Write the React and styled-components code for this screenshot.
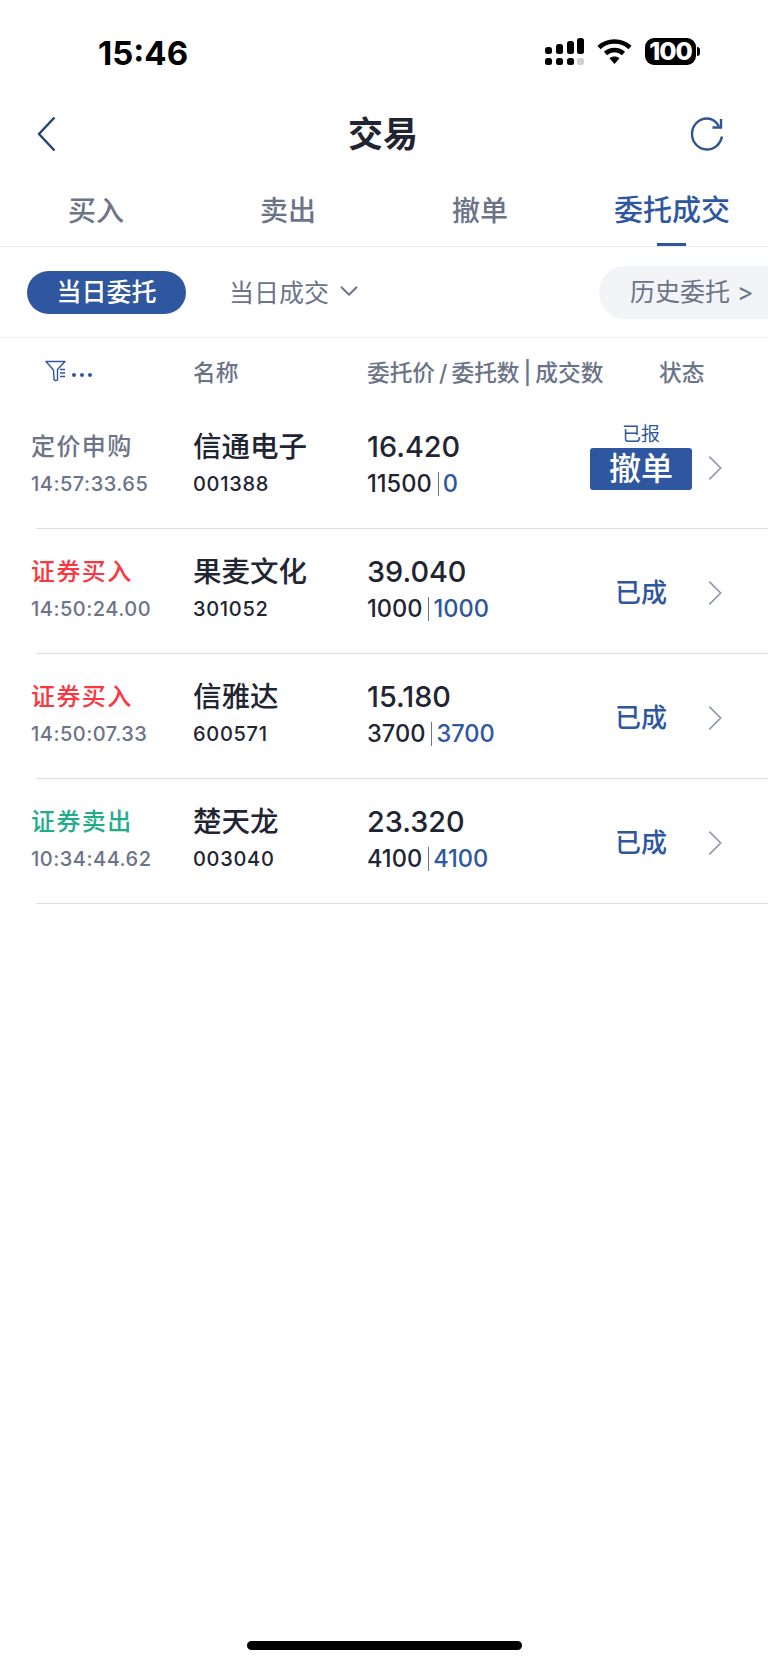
import styled, { createGlobalStyle } from "styled-components";
import { ChevronDown } from "lucide-react";

const GlobalStyle = createGlobalStyle`
  html, body {
    margin: 0;
    padding: 0;
    background: #ffffff;
  }
  body {
    font-family: Inter, "Noto Sans CJK SC", sans-serif;
    color: #1f2533;
  }
`;

const Page = styled.div`
  width: 768px;
  height: 1665px;
  display: flex;
  flex-direction: column;
  overflow: hidden;
  background: #fff;
  position: relative;
`;

const StatusBar = styled.div`
  height: 104px;
  box-sizing: border-box;
  padding: 38px 72px 0 98px;
  display: flex;
  justify-content: space-between;
  align-items: flex-start;
`;
const Clock = styled.div`
  font-family: Inter, sans-serif;
  font-size: 33px;
  font-weight: 700;
  line-height: 30px;
  color: #000;
`;
const StatusIcons = styled.div`
  display: flex;
  align-items: flex-start;
`;
const Battery = styled.div`
  width: 51px;
  height: 27px;
  margin-left: 13px;
  border-radius: 9px;
  background: #000;
  color: #fff;
  font-size: 25px;
  font-weight: 800;
  line-height: 27px;
  letter-spacing: -1px;
  text-align: center;
  position: relative;
  &::after {
    content: "";
    position: absolute;
    right: -4px;
    top: 9px;
    width: 3px;
    height: 9px;
    border-radius: 0 3px 3px 0;
    background: #000;
  }
`;

const NavBar = styled.div`
  height: 60px;
  padding: 0 44px 0 37px;
  display: grid;
  grid-template-columns: 1fr auto 1fr;
  align-items: center;
`;
const NavRight = styled.div`
  display: flex;
  justify-content: flex-end;
`;
const NavTitle = styled.div`
  margin-left: 5px;
  font-size: 35px;
  font-weight: 600;
  line-height: 60px;
  color: #1f2533;
`;

const Tabs = styled.div`
  height: 83px;
  box-sizing: border-box;
  display: grid;
  grid-template-columns: repeat(4, 192px);
  border-bottom: 1px solid #e8eaf0;
`;
const Tab = styled.div`
  position: relative;
  text-align: center;
  font-size: ${(props) => (props.$active ? "29px" : "28px")};
  font-weight: 500;
  padding-top: 9px;
  line-height: 76px;
  height: 82px;
  box-sizing: border-box;
  color: ${(props) => (props.$active ? "#2f57a0" : "#6b7488")};
  ${(props) =>
    props.$active &&
    `&::after {
      content: "";
      position: absolute;
      left: 81px;
      bottom: 0;
      width: 29px;
      height: 3px;
      background: #2f57a0;
    }`}
`;

const FilterBar = styled.div`
  height: 91px;
  box-sizing: border-box;
  padding: 19px 0 0 27px;
  display: flex;
  align-items: flex-start;
  border-bottom: 1px solid #eef0f4;
`;
const Pill = styled.div`
  width: 159px;
  height: 43px;
  margin-top: 5px;
  border-radius: 22px;
  background: #2f57a0;
  color: #fff;
  font-size: 25px;
  font-weight: 500;
  line-height: 43px;
  text-align: center;
`;
const FilterLink = styled.div`
  margin: 3px 0 0 43px;
  display: flex;
  align-items: center;
  gap: 5px;
  height: 43px;
  font-size: 25px;
  color: #6b7488;
`;
const HistoryButton = styled.div`
  margin-left: auto;
  width: 169px;
  height: 53px;
  box-sizing: border-box;
  padding-left: 31px;
  border-radius: 26px 0 0 26px;
  background: #f3f4f7;
  color: #6b7488;
  font-size: 25px;
  line-height: 53px;
  white-space: nowrap;
`;

const HeaderRow = styled.div`
  height: 66px;
  box-sizing: border-box;
  padding-left: 45px;
  display: flex;
  align-items: center;
  font-size: 22.7px;
  font-weight: 500;
  color: #6b7488;
`;
const FilterCell = styled.div`
  width: 148px;
  display: flex;
  align-items: center;
`;
const NameHead = styled.div`
  width: 174px;
`;
const PriceHead = styled.div`
  width: 292px;
  white-space: nowrap;
`;
const HeadSep = styled.span`
  margin: 0 4px;
`;

const Row = styled.div`
  height: 125px;
  box-sizing: border-box;
  padding: 25px 0 0 36px;
  display: grid;
  grid-template-columns: 157px 174px 223px 102px 30px;
  position: relative;
  &::after {
    content: "";
    position: absolute;
    left: 36px;
    right: 0;
    bottom: 0;
    height: 1px;
    background: #dcdee5;
  }
`;
const Cell = styled.div`
  display: flex;
  flex-direction: column;
`;
const TypeCell = styled(Cell)`
  margin-left: -5px;
`;
const TopLine = styled.div`
  height: 36px;
  line-height: 36px;
`;
const TradeType = styled(TopLine)`
  font-size: 24px;
  letter-spacing: 1.4px;
  font-weight: 500;
  color: ${(props) => props.$color};
`;
const Name = styled(TopLine)`
  font-size: 28.5px;
  font-weight: 500;
  color: #1f2533;
`;
const Price = styled(TopLine)`
  font-size: 28.8px;
  font-weight: 500;
  color: #1f2533;
`;
const BottomLine = styled.div`
  height: 38px;
  line-height: 38px;
`;
const Time = styled(BottomLine)`
  font-size: 20px;
  font-weight: 500;
  letter-spacing: 0.5px;
  color: #6b7488;
`;
const Code = styled(BottomLine)`
  font-size: 20px;
  font-weight: 500;
  letter-spacing: 0.7px;
  color: #1f2533;
`;
const Volume = styled(BottomLine)`
  display: flex;
  align-items: center;
  font-size: 23.6px;
  font-weight: 500;
  color: #1f2533;
`;
const VolumeSplit = styled.span`
  width: 1px;
  height: 24px;
  margin: 0 4px 0 6px;
  background: #6b7488;
`;
const Filled = styled.span`
  color: #2f57a0;
`;

const StatusCell = styled.div`
  display: flex;
  flex-direction: column;
  align-items: center;
  justify-content: ${(props) => (props.$pending ? "flex-start" : "center")};
  height: 78px;
`;
const StatusSmall = styled.div`
  font-size: 19px;
  line-height: 19px;
  color: #2f57a0;
  margin-top: -4px;
  margin-bottom: 4px;
`;
const CancelButton = styled.div`
  width: 102px;
  height: 42px;
  flex: none;
  border-radius: 3px;
  background: #2f57a0;
  color: #fff;
  font-size: 32px;
  font-weight: 500;
  line-height: 42px;
  text-align: center;
`;
const StatusDone = styled.div`
  font-size: 26px;
  font-weight: 500;
  line-height: 38px;
  color: #2f57a0;
`;
const ArrowCell = styled.div`
  display: flex;
  align-items: center;
  height: 78px;
  margin-left: 16px;
`;

const HomeBar = styled.div`
  width: 275px;
  height: 9px;
  border-radius: 5px;
  background: #000;
  position: absolute;
  left: 247px;
  top: 1641px;
`;

const Dots = styled.span`
  margin-left: 5px;
  margin-top: 8px;
  display: flex;
  gap: 4px;
  i {
    width: 4px;
    height: 4px;
    border-radius: 50%;
    background: #2f57a0;
  }
`;

const orders = [
  { type: "定价申购", color: "#6b7488", time: "14:57:33.65", name: "信通电子", code: "001388", price: "16.420", qty: "11500", filled: "0", pending: true },
  { type: "证券买入", color: "#fb3640", time: "14:50:24.00", name: "果麦文化", code: "301052", price: "39.040", qty: "1000", filled: "1000" },
  { type: "证券买入", color: "#fb3640", time: "14:50:07.33", name: "信雅达", code: "600571", price: "15.180", qty: "3700", filled: "3700" },
  { type: "证券卖出", color: "#22ad8a", time: "10:34:44.62", name: "楚天龙", code: "003040", price: "23.320", qty: "4100", filled: "4100" },
];

function SignalIcon() {
  return (
    <svg width="39" height="27" viewBox="0 0 39 27" fill="#000">
      <rect x="0" y="9" width="7" height="7" rx="2.5" />
      <rect x="11" y="6" width="7" height="10" rx="2.5" />
      <rect x="22" y="3" width="7" height="13" rx="2.5" />
      <rect x="32" y="0" width="7" height="16" rx="2.5" />
      <rect x="0" y="20" width="7" height="7" rx="2.5" />
      <rect x="11" y="20" width="7" height="7" rx="2.5" />
      <rect x="22" y="20" width="7" height="7" rx="2.5" />
      <rect x="32" y="20" width="7" height="7" rx="2.5" fill="#cfcfcf" />
    </svg>
  );
}

function WifiIcon() {
  return (
    <svg width="35" height="27" viewBox="0 0 35 27" fill="none" style={{ marginLeft: 13 }}>
      <path d="M2 9.5C10.5 1.5 24.5 1.5 33 9.5" stroke="#000" strokeWidth="4.6" />
      <path d="M8.5 15.5C13.5 10.8 21.5 10.8 26.5 15.5" stroke="#000" strokeWidth="4.6" />
      <path d="M12.5 20.3C15 18 20 18 22.5 20.3L17.5 26Z" fill="#000" />
    </svg>
  );
}

function BackIcon() {
  return (
    <svg width="19" height="36" viewBox="0 0 19 36" fill="none" stroke="#1f4477" strokeWidth="2.4">
      <path d="M17.5 1.5L2 18L17.5 34.5" />
    </svg>
  );
}

function RefreshIcon() {
  return (
    <svg width="34" height="36" viewBox="0 0 34 36" fill="none" stroke="#2f5590" strokeWidth="2.4">
      <path d="M29 10.5C26 5 21.5 2.5 17 2.5C8.8 2.5 2 9.3 2 18C2 26.7 8.8 33.5 17 33.5C24.5 33.5 30.5 28 32 20.5" />
      <path d="M31 3V11.5H22.5" />
    </svg>
  );
}

function FilterIcon() {
  return (
    <svg width="22" height="22" viewBox="0 0 22 22" fill="none" stroke="#2f57a0" strokeWidth="1.4">
      <path d="M1 1.5H20L12.5 9.5V19.5C12.5 20.8 10 20.8 9 19.5L8.5 10Z" strokeLinejoin="round" />
      <path d="M15 9.5H20M15 13H20M15 16.5H20" />
    </svg>
  );
}

function ArrowIcon() {
  return (
    <svg width="16" height="28" viewBox="0 0 16 28" fill="none" stroke="#8e96a8" strokeWidth="1.8">
      <path d="M1.5 1L14.5 14L1.5 27" />
    </svg>
  );
}

export default function App() {
  return (
    <Page>
      <GlobalStyle />
      <StatusBar>
        <Clock>15:46</Clock>
        <StatusIcons>
          <SignalIcon />
          <WifiIcon />
          <Battery>100</Battery>
        </StatusIcons>
      </StatusBar>
      <NavBar>
        <BackIcon />
        <NavTitle>交易</NavTitle>
        <NavRight>
          <RefreshIcon />
        </NavRight>
      </NavBar>
      <Tabs>
        <Tab>买入</Tab>
        <Tab>卖出</Tab>
        <Tab>撤单</Tab>
        <Tab $active>委托成交</Tab>
      </Tabs>
      <FilterBar>
        <Pill>当日委托</Pill>
        <FilterLink>
          当日成交
          <ChevronDown size={30} strokeWidth={1.5} />
        </FilterLink>
        <HistoryButton>历史委托 &gt;</HistoryButton>
      </FilterBar>
      <HeaderRow>
        <FilterCell>
          <FilterIcon />
          <Dots>
            <i />
            <i />
            <i />
          </Dots>
        </FilterCell>
        <NameHead>名称</NameHead>
        <PriceHead>
          委托价<HeadSep>/</HeadSep>委托数<HeadSep>|</HeadSep>成交数
        </PriceHead>
        <div>状态</div>
      </HeaderRow>
      {orders.map((o) => (
        <Row key={o.code}>
          <TypeCell>
            <TradeType $color={o.color}>{o.type}</TradeType>
            <Time>{o.time}</Time>
          </TypeCell>
          <Cell>
            <Name>{o.name}</Name>
            <Code>{o.code}</Code>
          </Cell>
          <Cell>
            <Price>{o.price}</Price>
            <Volume>
              {o.qty}
              <VolumeSplit />
              <Filled>{o.filled}</Filled>
            </Volume>
          </Cell>
          <StatusCell $pending={o.pending}>
            {o.pending ? (
              <>
                <StatusSmall>已报</StatusSmall>
                <CancelButton>撤单</CancelButton>
              </>
            ) : (
              <StatusDone>已成</StatusDone>
            )}
          </StatusCell>
          <ArrowCell>
            <ArrowIcon />
          </ArrowCell>
        </Row>
      ))}
      <HomeBar />
    </Page>
  );
}
